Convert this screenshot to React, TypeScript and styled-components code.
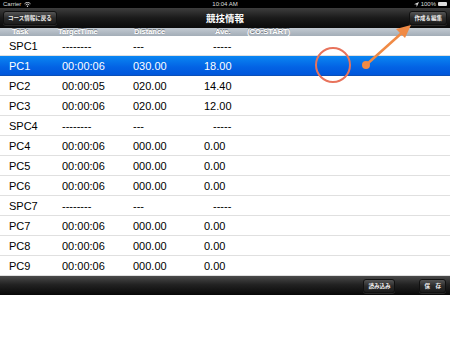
import React from "react";
import styled, { createGlobalStyle } from "styled-components";

const Global = createGlobalStyle`
  html, body { margin: 0; padding: 0; background: #fff; }
  body { font-family: "Liberation Sans", Arial, sans-serif; }
`;

const Screen = styled.div`
  position: relative;
  width: 450px;
  height: 338px;
  overflow: hidden;
  background: #fff;
  display: flex;
  flex-direction: column;
`;

const StatusBar = styled.div`
  height: 8px;
  background: #000;
  color: #ddd;
  font-size: 6px;
  display: grid;
  grid-template-columns: 1fr auto 1fr;
  align-items: center;
  padding: 0 3px;
  line-height: 8px;
`;

const StatusLeft = styled.div`
  display: flex;
  align-items: center;
  gap: 3px;
`;

const StatusRight = styled.div`
  display: flex;
  justify-content: flex-end;
  align-items: center;
  gap: 2px;
`;

const Battery = styled.span`
  display: inline-block;
  width: 9px;
  height: 4px;
  background: #ddd;
  border-radius: 1px;
`;

const NavBar = styled.div`
  height: 20px;
  background: linear-gradient(#3d3d3d, #1a1a1a 50%, #0a0a0a);
  display: flex;
  align-items: center;
  justify-content: space-between;
  padding: 0 3px;
  position: relative;
`;

const NavTitle = styled.div`
  position: absolute;
  left: 0;
  right: 0;
  text-align: center;
  color: #fff;
  font-size: 9.5px;
  font-weight: bold;
  font-family: "Noto Sans CJK JP", sans-serif;
  pointer-events: none;
`;

const BarButton = styled.div`
  height: 12px;
  padding: 0 4px;
  border-radius: 3px;
  border: 1px solid #111;
  background: linear-gradient(#555, #2c2c2c 50%, #1c1c1c);
  color: #eee;
  font-size: 5.5px;
  font-weight: bold;
  font-family: "Noto Sans CJK JP", sans-serif;
  display: flex;
  align-items: center;
  box-shadow: 0 1px 0 rgba(255,255,255,0.12);
  position: relative;
  z-index: 1;
`;

const HeaderRow = styled.div`
  height: 8px;
  background: linear-gradient(#c2cad2, #a3adb7);
  display: grid;
  grid-template-columns: 12px 46px 76px 81px 32px 1fr;
  color: #fff;
  font-size: 7.5px;
  font-weight: bold;
  line-height: 8px;
  text-shadow: 0 -0.6px 0 rgba(0,0,0,0.45);
  box-sizing: border-box;
`;

const HCell = styled.div`
  white-space: nowrap;
`;

const Table = styled.div`
  display: flex;
  flex-direction: column;
`;

const Row = styled.div<{ $selected?: boolean }>`
  height: 20px;
  box-sizing: border-box;
  display: grid;
  grid-template-columns: 9px 53px 71px 71px 1fr;
  align-items: center;
  font-size: 11px;
  color: ${(p) => (p.$selected ? "#fff" : "#000")};
  background: ${(p) =>
    p.$selected ? "linear-gradient(#0a86f2, #0362e4 60%, #0157db)" : "#fff"};
  border-bottom: 1px solid ${(p) => (p.$selected ? "#0a4fb8" : "#e0e0e0")};
`;

const Cell = styled.div<{ $indent?: boolean }>`
  white-space: nowrap;
  padding-left: ${(p) => (p.$indent ? "9px" : "0")};
`;

const ToolBar = styled.div`
  height: 19px;
  background: linear-gradient(#4a4a4a, #222 45%, #080808);
  display: flex;
  align-items: center;
  justify-content: flex-end;
  gap: 24px;
  padding: 0 4px;
`;

const Rest = styled.div`
  flex: 1;
  background: #fff;
`;

const Overlay = styled.svg`
  position: absolute;
  left: 0;
  top: 0;
  width: 450px;
  height: 338px;
  pointer-events: none;
`;

type R = { task: string; time: string; dist: string; ave: string; sel?: boolean };
const rows: R[] = [
  { task: "SPC1", time: "--------", dist: "---", ave: "-----" },
  { task: "PC1", time: "00:00:06", dist: "030.00", ave: "18.00", sel: true },
  { task: "PC2", time: "00:00:05", dist: "020.00", ave: "14.40" },
  { task: "PC3", time: "00:00:06", dist: "020.00", ave: "12.00" },
  { task: "SPC4", time: "--------", dist: "---", ave: "-----" },
  { task: "PC4", time: "00:00:06", dist: "000.00", ave: "0.00" },
  { task: "PC5", time: "00:00:06", dist: "000.00", ave: "0.00" },
  { task: "PC6", time: "00:00:06", dist: "000.00", ave: "0.00" },
  { task: "SPC7", time: "--------", dist: "---", ave: "-----" },
  { task: "PC7", time: "00:00:06", dist: "000.00", ave: "0.00" },
  { task: "PC8", time: "00:00:06", dist: "000.00", ave: "0.00" },
  { task: "PC9", time: "00:00:06", dist: "000.00", ave: "0.00" },
];

export default function App() {
  return (
    <>
      <Global />
      <Screen>
        <StatusBar>
          <StatusLeft>
            <span>Carrier</span>
            <svg width="7" height="5" viewBox="0 0 7 5">
              <path d="M0.5 1.8 A4 4 0 0 1 6.5 1.8" stroke="#ddd" strokeWidth="0.9" fill="none" />
              <path d="M1.7 3 A2.5 2.5 0 0 1 5.3 3" stroke="#ddd" strokeWidth="0.9" fill="none" />
              <circle cx="3.5" cy="4.3" r="0.7" fill="#ddd" />
            </svg>
          </StatusLeft>
          <span>10:04 AM</span>
          <StatusRight>
            <svg width="5" height="5" viewBox="0 0 5 5">
              <path d="M5 0 L0 2.3 L2.5 2.5 L2.7 5 Z" fill="#ddd" />
            </svg>
            <span>100%</span>
            <Battery />
          </StatusRight>
        </StatusBar>
        <NavBar>
          <BarButton>コース情報に戻る</BarButton>
          <NavTitle>競技情報</NavTitle>
          <BarButton>作成＆編集</BarButton>
        </NavBar>
        <HeaderRow>
          <span />
          <HCell>Task</HCell>
          <HCell>TargetTime</HCell>
          <HCell>Distance</HCell>
          <HCell>Ave.</HCell>
          <HCell>(CO:START)</HCell>
        </HeaderRow>
        <Table>
          {rows.map((r) => (
            <Row key={r.task} $selected={r.sel}>
              <span />
              <Cell>{r.task}</Cell>
              <Cell>{r.time}</Cell>
              <Cell>{r.dist}</Cell>
              <Cell $indent={r.ave.startsWith("-")}>{r.ave}</Cell>
            </Row>
          ))}
        </Table>
        <ToolBar>
          <BarButton>読み込み</BarButton>
          <BarButton>保　存</BarButton>
        </ToolBar>
        <Rest />
        <Overlay viewBox="0 0 450 338">
          <circle cx="333" cy="65" r="17" fill="none" stroke="#e8735c" strokeWidth="2" />
          <line x1="366" y1="65" x2="404" y2="31" stroke="#f08a45" strokeWidth="2.5" strokeLinecap="round" />
          <polygon points="411,25 396,29 405,38" fill="#f08a45" />
          <circle cx="366" cy="65" r="4" fill="#f08a45" />
        </Overlay>
      </Screen>
    </>
  );
}
